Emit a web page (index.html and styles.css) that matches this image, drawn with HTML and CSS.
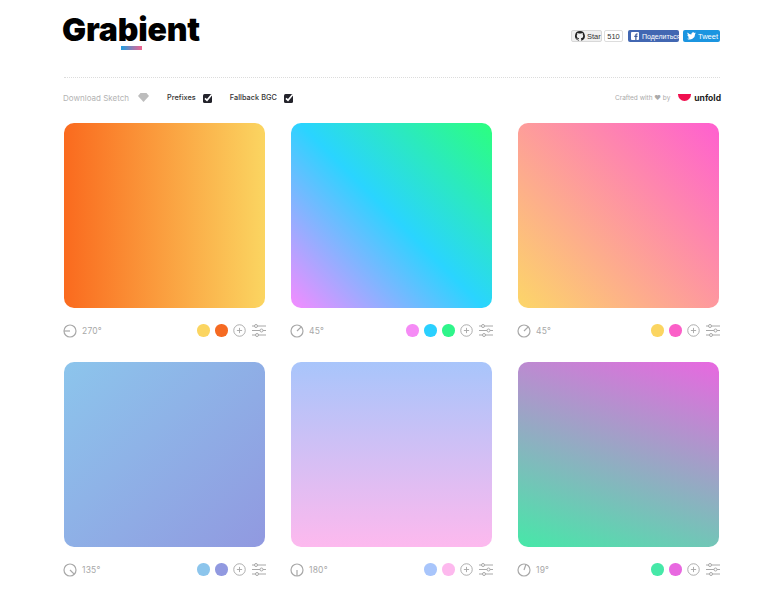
FILE: index.html
```html
<!DOCTYPE html>
<html lang="en">
<head>
  <meta charset="UTF-8" />
  <meta name="viewport" content="width=device-width, initial-scale=1.0" />
  <title>Grabient</title>
  <link rel="stylesheet" href="styles.css">
</head>
<body>
  <svg class="sprites" width="0" height="0">
    <symbol id="plus" viewBox="0 0 14 14">
      <circle cx="7" cy="7" r="6.200" fill="none" stroke="#a8a8a8" stroke-width="1"/>
      <path d="M7 4.200v5.600M4.200 7h5.600" stroke="#a8a8a8" stroke-width="1" fill="none"/>
    </symbol>
    <symbol id="sliders" viewBox="0 0 14 13">
      <path d="M0 2h14M0 6.500h14M0 11h14" stroke="#a8a8a8" stroke-width="1" fill="none"/>
      <circle cx="4" cy="2" r="1.500" fill="#fff" stroke="#a8a8a8"/>
      <circle cx="9.500" cy="6.500" r="1.500" fill="#fff" stroke="#a8a8a8"/>
      <circle cx="5" cy="11" r="1.500" fill="#fff" stroke="#a8a8a8"/>
    </symbol>
    <symbol id="tick" viewBox="0 0 10 10">
      <rect y="1" width="9" height="9" rx="1.500" fill="#23232b"/>
      <path d="M2 5.300l2 2L8.800 1.500" stroke="#fff" stroke-width="1.700" fill="none"/>
    </symbol>
  </svg>

  <header class="top">
    <div class="logo">Grabient<span class="logo-bar"></span></div>
    <div class="social">
      <span class="gh-btn">
        <svg width="10" height="10" viewBox="0 0 16 16"><path fill="#222" d="M8 0a8 8 0 0 0-2.500 15.600c.4.100.5-.2.500-.4v-1.400c-2.200.5-2.700-1-2.700-1-.4-.9-.9-1.200-.9-1.200-.7-.5.100-.5.100-.5.800.1 1.200.8 1.200.8.700 1.200 1.900.9 2.300.7.100-.5.300-.9.500-1.100-1.800-.2-3.600-.9-3.600-4 0-.9.300-1.600.8-2.100-.1-.2-.4-1 .1-2.100 0 0 .7-.2 2.200.8a7.600 7.600 0 0 1 4 0c1.500-1 2.200-.8 2.200-.8.400 1.100.200 1.900.1 2.100.5.600.8 1.300.8 2.100 0 3.100-1.900 3.700-3.700 3.900.3.300.6.800.6 1.500v2.200c0 .2.100.5.600.4A8 8 0 0 0 8 0z"/></svg>
        Star
      </span>
      <span class="gh-count">510</span>
      <span class="fb-btn">
        <svg width="8" height="8" viewBox="0 0 9 9"><rect width="9" height="9" rx="1" fill="#fff"/><path fill="#3b5998" d="M6.200 9V5.600h1.100l.2-1.300H6.200v-.8c0-.4.100-.6.600-.6h.7V1.700c-.2 0-.5-.1-1-.1-1 0-1.700.6-1.700 1.700v1H3.700v1.300h1.100V9z"/></svg>
        <span class="fb-text">Поделиться</span>
      </span>
      <span class="tw-btn">
        <svg width="9" height="8" viewBox="0 0 24 20"><path fill="#fff" d="M24 2.400c-.9.400-1.800.7-2.800.8 1-.6 1.800-1.600 2.200-2.700-1 .6-2 1-3.100 1.200A4.900 4.900 0 0 0 11.900 6.200C7.800 6 4.200 4 1.700.9c-1.300 2.200-.7 5.100 1.500 6.600-.8 0-1.600-.2-2.200-.6 0 2.300 1.600 4.400 3.900 4.900-.7.200-1.500.2-2.200.1.600 2 2.400 3.400 4.600 3.400A9.900 9.900 0 0 1 0 17.300 14 14 0 0 0 21.500 4.900c1-.7 1.800-1.500 2.500-2.500z"/></svg>
        Tweet
      </span>
    </div>
  </header>

  <div class="toolbar">
    <div class="options">
      <span class="opt-download">Download Sketch</span>
      <svg class="diamond" width="11" height="9" viewBox="0 0 11 9"><path fill="#bdbdbd" d="M2.500 0h6L11 3 5.500 9 0 3z"/></svg>
      <span class="opt">Prefixes <svg width="10" height="10"><use href="#tick"/></svg></span>
      <span class="opt">Fallback BGC <svg width="10" height="10"><use href="#tick"/></svg></span>
    </div>
    <div class="credit">
      <span>Crafted with ♥ by</span>
      <span class="unfold-mark"></span>
      <span class="unfold-name">unfold</span>
    </div>
  </div>

  <main class="grid">
    <section class="card">
      <div class="swatch g1"></div>
      <div class="meta">
        <div class="angle">
          <svg width="14" height="14" viewBox="0 0 14 14"><circle cx="7" cy="7" r="6" fill="none" stroke="#a8a8a8" stroke-width="1.200"/><path d="M7 7H1" stroke="#a8a8a8" stroke-width="1.200" fill="none"/></svg>
          <span>270°</span>
        </div>
        <div class="tools">
          <span class="dot c-yellow"></span><span class="dot c-orange"></span>
          <svg class="plus" width="13" height="13"><use href="#plus"/></svg>
          <svg class="sliders" width="14" height="13"><use href="#sliders"/></svg>
        </div>
      </div>
    </section>

    <section class="card">
      <div class="swatch g2"></div>
      <div class="meta">
        <div class="angle">
          <svg width="14" height="14" viewBox="0 0 14 14"><circle cx="7" cy="7" r="6" fill="none" stroke="#a8a8a8" stroke-width="1.200"/><path d="M7 7l4.200-4.200" stroke="#a8a8a8" stroke-width="1.200" fill="none"/></svg>
          <span>45°</span>
        </div>
        <div class="tools">
          <span class="dot c-violet"></span><span class="dot c-cyan"></span><span class="dot c-green"></span>
          <svg class="plus" width="13" height="13"><use href="#plus"/></svg>
          <svg class="sliders" width="14" height="13"><use href="#sliders"/></svg>
        </div>
      </div>
    </section>

    <section class="card">
      <div class="swatch g3"></div>
      <div class="meta">
        <div class="angle">
          <svg width="14" height="14" viewBox="0 0 14 14"><circle cx="7" cy="7" r="6" fill="none" stroke="#a8a8a8" stroke-width="1.200"/><path d="M7 7l4.200-4.200" stroke="#a8a8a8" stroke-width="1.200" fill="none"/></svg>
          <span>45°</span>
        </div>
        <div class="tools">
          <span class="dot c-yellow"></span><span class="dot c-pink"></span>
          <svg class="plus" width="13" height="13"><use href="#plus"/></svg>
          <svg class="sliders" width="14" height="13"><use href="#sliders"/></svg>
        </div>
      </div>
    </section>

    <section class="card">
      <div class="swatch g4"></div>
      <div class="meta">
        <div class="angle">
          <svg width="14" height="14" viewBox="0 0 14 14"><circle cx="7" cy="7" r="6" fill="none" stroke="#a8a8a8" stroke-width="1.200"/><path d="M7 7l4.200 4.200" stroke="#a8a8a8" stroke-width="1.200" fill="none"/></svg>
          <span>135°</span>
        </div>
        <div class="tools">
          <span class="dot c-sky"></span><span class="dot c-periwinkle"></span>
          <svg class="plus" width="13" height="13"><use href="#plus"/></svg>
          <svg class="sliders" width="14" height="13"><use href="#sliders"/></svg>
        </div>
      </div>
    </section>

    <section class="card">
      <div class="swatch g5"></div>
      <div class="meta">
        <div class="angle">
          <svg width="14" height="14" viewBox="0 0 14 14"><circle cx="7" cy="7" r="6" fill="none" stroke="#a8a8a8" stroke-width="1.200"/><path d="M7 7v6" stroke="#a8a8a8" stroke-width="1.200" fill="none"/></svg>
          <span>180°</span>
        </div>
        <div class="tools">
          <span class="dot c-blue"></span><span class="dot c-rose"></span>
          <svg class="plus" width="13" height="13"><use href="#plus"/></svg>
          <svg class="sliders" width="14" height="13"><use href="#sliders"/></svg>
        </div>
      </div>
    </section>

    <section class="card">
      <div class="swatch g6"></div>
      <div class="meta">
        <div class="angle">
          <svg width="14" height="14" viewBox="0 0 14 14"><circle cx="7" cy="7" r="6" fill="none" stroke="#a8a8a8" stroke-width="1.200"/><path d="M7 7l2-5.700" stroke="#a8a8a8" stroke-width="1.200" fill="none"/></svg>
          <span>19°</span>
        </div>
        <div class="tools">
          <span class="dot c-mint"></span><span class="dot c-orchid"></span>
          <svg class="plus" width="13" height="13"><use href="#plus"/></svg>
          <svg class="sliders" width="14" height="13"><use href="#sliders"/></svg>
        </div>
      </div>
    </section>
  </main>
</body>
</html>
```

FILE: styles.css
```css
body {
  margin: 0;
  padding: 0 60px 0 64px;
  height: 590px;
  overflow: hidden;
  box-sizing: border-box;
  background: #fff;
  font-family: "Inter", "Liberation Sans", sans-serif;
  color: #333;
}
.sprites {
  position: absolute;
}
.top {
  display: flex;
  justify-content: space-between;
  align-items: flex-start;
  height: 77px;
  border-bottom: 1px dotted #dcdcdc;
}
.logo {
  margin: 13px 0 0 -2px;
  font-size: 32px;
  font-weight: 900;
  line-height: 33px;
  letter-spacing: -0.2px;
  color: #000;
}
.logo-bar {
  display: block;
  margin: 0 0 0 59px;
  width: 21px;
  height: 4px;
  background: linear-gradient(90deg, #1f9fe0, #f2628f);
}
.social {
  margin-top: 30px;
  display: flex;
  font-family: "Liberation Sans", sans-serif;
  font-size: 7.500px;
}
.gh-btn, .gh-count, .fb-btn, .tw-btn {
  height: 12px;
  display: flex;
  align-items: center;
  border-radius: 2px;
  box-sizing: border-box;
  flex-shrink: 0;
}
.social svg {
  flex-shrink: 0;
}
.gh-btn {
  width: 31px;
  padding-left: 3px;
  gap: 2px;
  background: #f0f0f0;
  border: 1px solid #d8d8d8;
  color: #333;
}
.gh-count {
  width: 19px;
  margin-left: 2px;
  justify-content: center;
  background: #fff;
  border: 1px solid #ddd;
  color: #333;
}
.fb-btn {
  width: 51px;
  margin-left: 5px;
  padding-left: 3px;
  gap: 3px;
  background: #4267b2;
  color: #fff;
  overflow: hidden;
  white-space: nowrap;
}
.fb-text {
  font-size: 7px;
}
.tw-btn {
  width: 37px;
  margin-left: 4px;
  padding-left: 4px;
  gap: 2px;
  background: #1b95e0;
  color: #fff;
}
.toolbar {
  height: 39px;
  display: flex;
  justify-content: space-between;
  align-items: center;
  font-size: 8px;
  margin-bottom: 6px;
}
.options {
  display: flex;
  align-items: center;
  margin-left: -1px;
}
.opt-download {
  color: #b3b3b3;
}
.diamond {
  margin: 0 0 0 9px;
}
.opt {
  margin-left: 18px;
  display: flex;
  align-items: center;
  gap: 7px;
  font-size: 7.300px;
  font-weight: 500;
  letter-spacing: 0.05px;
  color: #333;
}
.opt + .opt {
  margin-left: 17px;
}
.credit {
  display: flex;
  align-items: center;
  margin-right: -1px;
  font-size: 6.500px;
  color: #aaa;
}
.unfold-mark {
  margin: 0 3px 0 8px;
  width: 13px;
  height: 7px;
  background: #f0104f;
  border-radius: 0 0 7px 7px;
}
.unfold-name {
  font-size: 8.500px;
  font-weight: 700;
  color: #222;
}
.grid {
  display: grid;
  grid-template-columns: repeat(3, 201.330px);
  column-gap: 25.670px;
}
.swatch {
  height: 185px;
  border-radius: 10px;
}
.meta {
  height: 54px;
  padding-top: 16px;
  box-sizing: border-box;
  display: flex;
  justify-content: space-between;
  align-items: flex-start;
  margin-right: -1px;
}
.angle {
  display: flex;
  align-items: center;
  gap: 5px;
  margin-left: -1px;
  font-size: 8.500px;
  letter-spacing: 0.2px;
  color: #a8a8a8;
}
.tools {
  display: flex;
  align-items: center;
}
.dot {
  width: 12.500px;
  height: 12.500px;
  margin-right: 5.500px;
  border-radius: 50%;
}
.sliders {
  margin-left: 6px;
}
.g1 { background: linear-gradient(270deg, #fbd561, #fa6a1e); }
.g2 { background: linear-gradient(45deg, #f58bff, #2ad4ff, #2cff7e); }
.g3 { background: linear-gradient(45deg, #fcd668, #ff5fd0); }
.g4 { background: linear-gradient(135deg, #8cc5ec, #9199e0); }
.g5 { background: linear-gradient(180deg, #a8c5fb, #fdb9ee); }
.g6 { background: linear-gradient(19deg, #46e8a8, #e868e0); }
.c-yellow { background: #fbd561; }
.c-orange { background: #f56a22; }
.c-violet { background: #f58bf5; }
.c-cyan { background: #2ad0ff; }
.c-green { background: #2ff58a; }
.c-pink { background: #fb5fc8; }
.c-sky { background: #8cc5ec; }
.c-periwinkle { background: #9199e0; }
.c-blue { background: #a8c5fb; }
.c-rose { background: #fdb9ee; }
.c-mint { background: #46e8a8; }
.c-orchid { background: #e868e0; }
```
